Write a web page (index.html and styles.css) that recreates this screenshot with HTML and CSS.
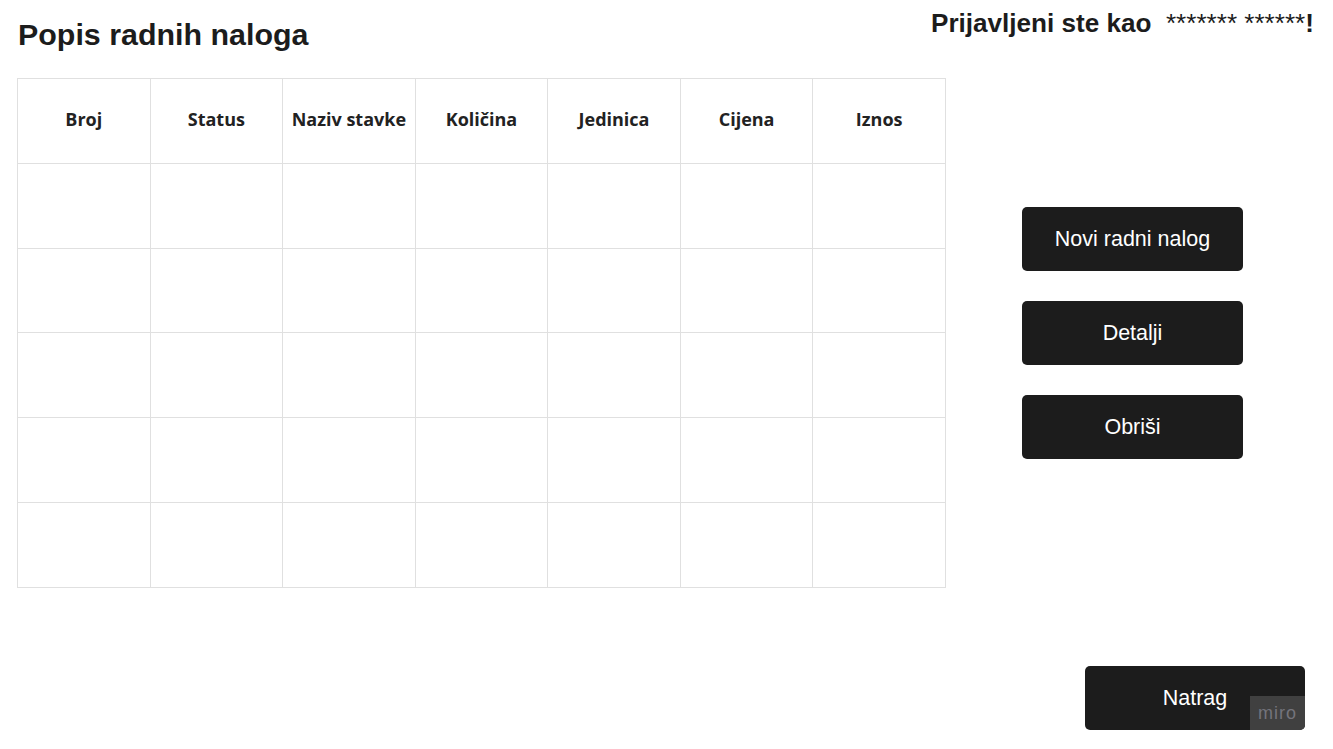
FILE: index.html
```html
<!DOCTYPE html>
<html lang="hr">
<head>
<meta charset="utf-8">
<title>Popis radnih naloga</title>
<link rel="stylesheet" href="styles.css">
</head>
<body>
<div class="page">
  <main class="main">
    <h1 class="title">Popis radnih naloga</h1>
    <table class="grid">
      <thead>
        <tr>
          <th>Broj</th><th>Status</th><th>Naziv stavke</th><th>Količina</th><th>Jedinica</th><th>Cijena</th><th>Iznos</th>
        </tr>
      </thead>
      <tbody>
        <tr><td></td><td></td><td></td><td></td><td></td><td></td><td></td></tr>
        <tr><td></td><td></td><td></td><td></td><td></td><td></td><td></td></tr>
        <tr><td></td><td></td><td></td><td></td><td></td><td></td><td></td></tr>
        <tr><td></td><td></td><td></td><td></td><td></td><td></td><td></td></tr>
        <tr><td></td><td></td><td></td><td></td><td></td><td></td><td></td></tr>
      </tbody>
    </table>
  </main>
  <aside class="side">
    <div class="login">Prijavljeni ste kao&nbsp; <span class="user">******* ******</span>!</div>
    <div class="actions">
      <button class="btn">Novi radni nalog</button>
      <button class="btn">Detalji</button>
      <button class="btn">Obriši</button>
    </div>
    <div class="back">
      <button class="btn btn-back">Natrag<span class="miro">miro</span></button>
    </div>
  </aside>
</div>
</body>
</html>
```

FILE: styles.css
```css
* { box-sizing: border-box; }
html, body { margin: 0; padding: 0; background: #ffffff; }
body { font-family: "Liberation Sans", Arial, sans-serif; color: #1c1c1c; }

.page {
  display: flex;
  height: 749px;
}

.main {
  width: 946px;
  padding-left: 17px;
  padding-top: 16px;
}

.title {
  margin: 0 0 26px 1px;
  font-size: 30.4px;
  line-height: 36px;
  font-weight: 700;
  color: #1c1c1c;
}

.grid {
  width: 929px;
  border-collapse: collapse;
  table-layout: fixed;
  border: 1px solid #d6d6d6;
}
.grid th, .grid td {
  border: 1px solid #e0e0e0;
  height: 84.8px;
  padding: 0;
}
.grid th {
  font-family: "Open Sans", sans-serif;
  font-weight: 700;
  font-size: 18px;
  color: #222222;
  text-align: center;
  vertical-align: middle;
  padding-bottom: 4px;
}

.side {
  flex: 1;
  display: flex;
  flex-direction: column;
  padding-bottom: 19px;
}

.login {
  padding-top: 8px;
  margin-left: -15px;
  font-size: 26.1px;
  line-height: 30px;
  font-weight: 700;
  color: #1c1c1c;
  white-space: nowrap;
}
.login .user { font-weight: 400; }

.actions {
  margin-top: 169px;
  margin-left: 76px;
  display: flex;
  flex-direction: column;
  gap: 30px;
}

.btn {
  width: 221px;
  height: 64px;
  border: none;
  border-radius: 5px;
  background: #1c1c1c;
  color: #ffffff;
  font-family: "Liberation Sans", Arial, sans-serif;
  font-size: 21.5px;
  padding: 0;
  cursor: pointer;
}

.back {
  margin-top: auto;
  margin-left: 139px;
}
.btn-back {
  position: relative;
  width: 220px;
}
.miro {
  position: absolute;
  right: 0;
  bottom: 0;
  width: 55px;
  height: 34px;
  background: #404040;
  color: #74747c;
  font-size: 18px;
  line-height: 34px;
  letter-spacing: 1px;
  text-align: center;
  border-bottom-right-radius: 5px;
}
```
